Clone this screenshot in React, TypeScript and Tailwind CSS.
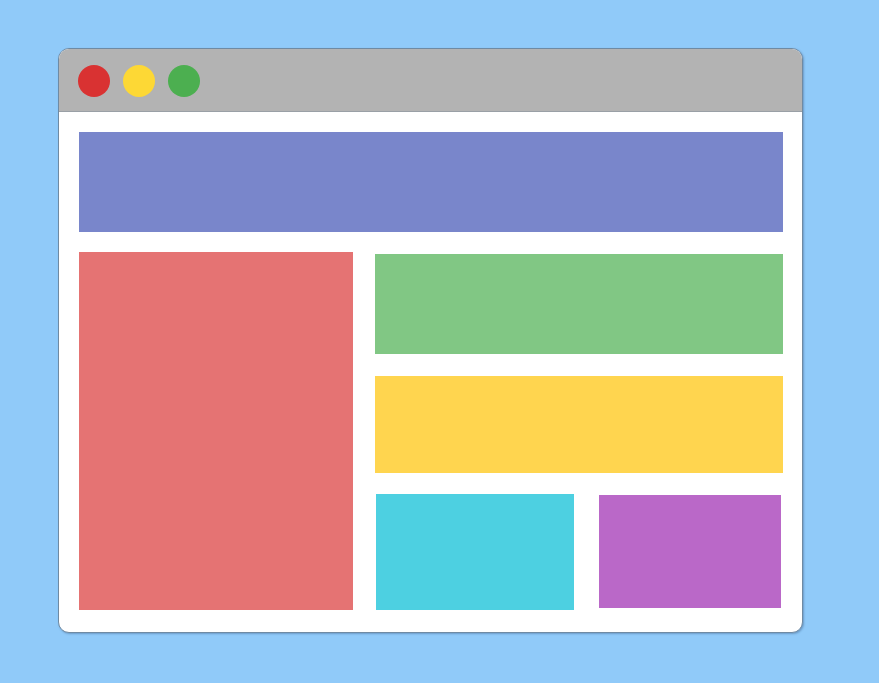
export default function App() {
  return (
    <div className="w-[879px] h-[683px] bg-[#90caf9] pt-[48px] pl-[58px] overflow-hidden">
      <div className="w-[745px] h-[585px] rounded-[11px] border border-[#6f8aa3] bg-white overflow-hidden flex flex-col shadow-[1px_1px_2px_rgba(40,70,110,0.35)]">
        <div className="h-[63px] bg-[#b3b3b3] border-b border-[#9aa0a6] flex items-start pt-[16px] pl-[19px] gap-[13px] shrink-0">
          <div className="w-[32px] h-[32px] rounded-full bg-[#d93232]" />
          <div className="w-[32px] h-[32px] rounded-full bg-[#fdd835]" />
          <div className="w-[32px] h-[32px] rounded-full bg-[#4caf50]" />
        </div>
        <div className="flex-1 flex flex-col pt-[20px] pl-[20px] pr-[19px] pb-[22px] gap-[20px]">
          <div className="h-[100px] bg-[#7986cb] shrink-0" />
          <div className="flex-1 flex gap-[22px]">
            <div className="w-[274px] bg-[#e57373]" />
            <div className="flex-1 flex flex-col pt-[2px]">
              <div className="h-[100px] bg-[#81c784] shrink-0" />
              <div className="h-[97px] mt-[22px] bg-[#ffd54f] shrink-0" />
              <div className="flex-1 mt-[21px] flex">
                <div className="w-[198px] ml-[1px] bg-[#4dd0e1]" />
                <div className="w-[182px] ml-[25px] mt-[1px] mb-[2px] bg-[#ba68c8]" />
              </div>
            </div>
          </div>
        </div>
      </div>
    </div>
  );
}
